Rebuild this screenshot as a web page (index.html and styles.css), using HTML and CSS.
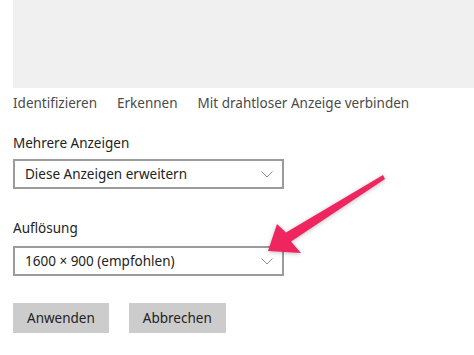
FILE: index.html
```html
<!DOCTYPE html>
<html lang="de">
<head>
    <meta charset="UTF-8">
    <title>Anzeige</title>
    <link rel="stylesheet" href="styles.css">
</head>
<body>
    <div class="page">
        <div class="preview"></div>
        <div class="links">
            <span>Identifizieren</span>
            <span>Erkennen</span>
            <span>Mit drahtloser Anzeige verbinden</span>
        </div>
        <div class="label first">Mehrere Anzeigen</div>
        <div class="select">
            <span>Diese Anzeigen erweitern</span>
            <svg class="chev" width="12" height="7" viewBox="0 0 12 7"><path d="M0.5 0.5 L6 6 L11.5 0.5" fill="none" stroke="#8a8a8a" stroke-width="1"/></svg>
        </div>
        <div class="label second">Auflösung</div>
        <div class="select res">
            <span>1600 × 900 (empfohlen)</span>
            <svg class="chev" width="12" height="7" viewBox="0 0 12 7"><path d="M0.5 0.5 L6 6 L11.5 0.5" fill="none" stroke="#8a8a8a" stroke-width="1"/></svg>
        </div>
        <div class="buttons">
            <button>Anwenden</button>
            <button>Abbrechen</button>
        </div>
    </div>
    <svg class="arrow" width="474" height="355" viewBox="0 0 474 355">
        <polygon points="383,175 286,232.5 277,224 268,251 301,253 291,241.5 385,179" fill="#ef2560"/>
    </svg>
</body>
</html>
```

FILE: styles.css
```css
*{
    margin: 0;padding: 0;
    box-sizing: border-box;
}
body{
    position: relative;
    width: 474px;
    height: 355px;
    overflow: hidden;
    background: #fff;
    font-family: "Noto Sans", "Open Sans", sans-serif;
    font-size: 13.5px;
    color: #222;
}
.page{
    padding-left: 13px;
}
.preview{
    height: 88px;
    background-color: #f0f0f0;
}
.links{
    display: flex;
    gap: 20px;
    margin-top: 5px;
    line-height: 20px;
    color: #4a4a4a;
}
.label{
    line-height: 20px;
}
.first{
    margin-top: 20px;
}
.second{
    margin-top: 29px;
}
.select{
    display: flex;
    align-items: center;
    width: 271px;
    height: 30px;
    margin-top: 6px;
    padding: 0 9px 0 10px;
    border: 2px solid #9b9b9b;
}
.res{
    margin-top: 8px;
}
.chev{
    margin-left: auto;
}
.buttons{
    display: flex;
    gap: 20px;
    margin-top: 27px;
}
button{
    height: 30px;
    padding: 0 14px;
    border: none;
    background-color: #cccccc;
    font-family: inherit;
    font-size: 13.5px;
    color: #222;
}
.arrow{
    position: absolute;
    top: 0;
    left: 0;
    pointer-events: none;
    filter: drop-shadow(0 1px 2px rgba(0,0,0,0.25));
}
```
